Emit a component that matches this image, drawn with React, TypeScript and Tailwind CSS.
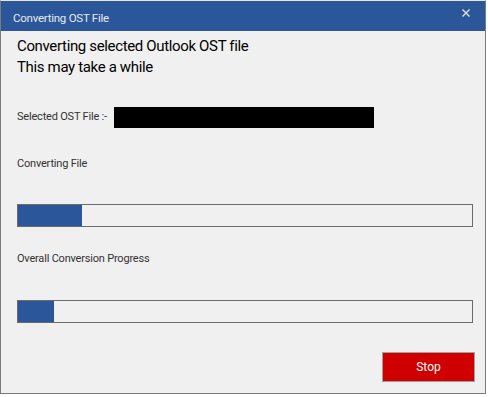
const ProgressBar = ({ fill }: { fill: number }) => (
  <div className="w-[456px] h-[23px] border border-[#6b6b6b] bg-[#f0f0f0]">
    <div className="h-full bg-[#2b579a]" style={{ width: `${fill}px` }}></div>
  </div>
);

const App = () => {
  return (
    <div className="w-[488px] h-[397px] bg-white font-['Roboto',sans-serif]">
      <div className="w-[486px] h-[394px] flex flex-col border border-[#7a7a7a] border-t-[#e8e8e8] bg-[#f0f0f0]">
        <div className="h-[30px] bg-[#2b579a] flex items-center justify-between pl-[12px] pr-[15px] shrink-0">
          <span className="text-[11.5px] tracking-[-0.25px] text-[#e6e9f0] pt-[6px]">Converting OST File</span>
          <svg width="8" height="8" viewBox="0 0 8 8" className="-mt-[6px]">
            <path d="M0.5 0.5 L7.5 7.5 M7.5 0.5 L0.5 7.5" stroke="#dfe4ee" strokeWidth="1.4" />
          </svg>
        </div>

        <div className="flex flex-col pl-[16px] pt-[5px]">
          <div className="text-[15px] leading-[21px] tracking-[-0.35px] text-black">
            <p>Converting selected Outlook OST file</p>
            <p>This may take a while</p>
          </div>

          <div className="flex items-center mt-[29px] h-[21px]">
            <span className="text-[11px] tracking-[-0.2px] text-[#333] whitespace-nowrap w-[97px]">Selected OST File :-</span>
            <div className="w-[260px] h-[21px] bg-black"></div>
          </div>

          <p className="mt-[28px] text-[11px] tracking-[-0.2px] leading-[16px] text-[#333]">Converting File</p>
          <div className="mt-[32px]">
            <ProgressBar fill={64} />
          </div>

          <p className="mt-[24px] text-[11px] tracking-[-0.2px] leading-[16px] text-[#333]">Overall Conversion Progress</p>
          <div className="mt-[33px]">
            <ProgressBar fill={36} />
          </div>

          <div className="flex justify-end mt-[29px] pr-[10px]">
            <button className="w-[93px] h-[30px] bg-[#d00000] border border-[#a0a0a0] text-white text-[12px]">
              Stop
            </button>
          </div>
        </div>
      </div>
    </div>
  );
};

export default App;
